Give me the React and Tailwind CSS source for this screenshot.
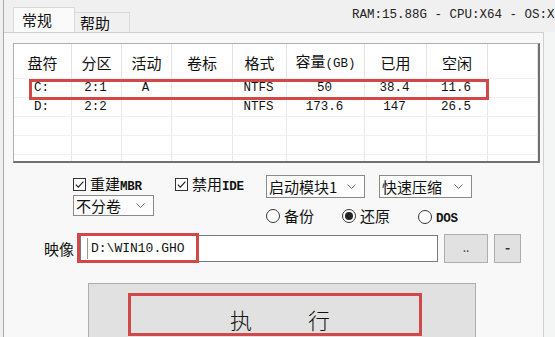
import React from 'react';

// 窗口里统一用的字体
const cjk = "font-['Noto_Sans_CJK_SC',sans-serif]";
const mono = "font-['Liberation_Mono','Noto_Sans_CJK_SC',monospace]";

const cols = [
  { label: '盘符', w: 'w-[58px]' },
  { label: '分区', w: 'w-[50px]' },
  { label: '活动', w: 'w-[50px]' },
  { label: '卷标', w: 'w-[61px]' },
  { label: '格式', w: 'w-[54px]' },
  { label: '容量(GB)', w: 'w-[78px]' },
  { label: '已用', w: 'w-[62px]' },
  { label: '空闲', w: 'w-[61px]' },
  { label: '', w: 'flex-1' },
];

const rows = [
  ['C:', '2:1', 'A', '', 'NTFS', '50', '38.4', '11.6', ''],
  ['D:', '2:2', '', '', 'NTFS', '173.6', '147', '26.5', ''],
  ['', '', '', '', '', '', '', '', ''],
  ['', '', '', '', '', '', '', '', ''],
  ['', '', '', '', '', '', '', '', ''],
];

function Chevron() {
  return (
    <svg width="9" height="5" viewBox="0 0 9 5" className="shrink-0">
      <polyline points="0.5,0.5 4.5,4.5 8.5,0.5" fill="none" stroke="#6b6b6b" strokeWidth="1" />
    </svg>
  );
}

function Checkbox({ children }) {
  return (
    <div className="flex items-center">
      <div className="w-[13px] h-[13px] border border-[#333] bg-white flex items-center justify-center">
        <svg width="11" height="11" viewBox="0 0 11 11">
          <polyline points="1.8,5.6 4.3,8.2 9.4,2.6" fill="none" stroke="#222" strokeWidth="1.2" />
        </svg>
      </div>
      <span className={`ml-[4px] text-[15px] leading-none text-[#111] ${cjk}`}>{children}</span>
    </div>
  );
}

function Radio({ checked, children }) {
  return (
    <div className="flex items-center">
      <div className="w-[14px] h-[14px] rounded-full border border-[#333] bg-white flex items-center justify-center">
        {checked && <div className="w-[8px] h-[8px] rounded-full bg-[#222]" />}
      </div>
      <span className="ml-[4px] text-[15px] leading-none text-[#111]">{children}</span>
    </div>
  );
}

function Combo({ w, h, children }) {
  return (
    <div className={`${w} ${h} border border-[#8a8a8a] bg-[#fdfdfd] flex items-center justify-between pl-[2px] pr-[8px]`}>
      <span className={`text-[15px] leading-none text-[#111] ${cjk}`}>{children}</span>
      <Chevron />
    </div>
  );
}

export default function App() {
  return (
    <div className={`w-[555px] h-[337px] overflow-hidden bg-[#f0f0f0] ${cjk}`}>
      <div className="ml-[3px] w-[552px] h-full border-l border-[#a9a9a9] flex flex-col">
        {/* 顶部：标签页 + 系统信息 */}
        <div className="h-[32px] shrink-0 flex items-end">
          <div className="ml-[9px] w-[62px] h-[25px] shrink-0 bg-[#fafafa] border border-b-0 border-[#d9d9d9] pl-[8px] pt-[4px]">
            <div className="text-[15px] leading-none text-[#111]">常规</div>
          </div>
          <div className="w-[55px] h-[20px] shrink-0 bg-[#f0f0f0] border border-b-0 border-l-0 border-[#d9d9d9] pl-[5px] pt-[2px]">
            <div className="text-[15px] leading-none text-[#111]">帮助</div>
          </div>
          <div className="flex-1 min-w-0 self-start pt-[9px] pl-[222px]">
            <div className={`whitespace-nowrap text-[12.5px] leading-none text-[#222] ${mono}`}>
              RAM:15.88G - CPU:X64 - OS:X
            </div>
          </div>
        </div>

        <div className="flex-1 flex">
          {/* 常规 页 */}
          <div className="w-[540px] shrink-0 border-t border-r border-[#d0d0d0] bg-[#f8f8f8] pl-[9px] pt-[10px] flex flex-col">
            {/* 分区列表 */}
            <div className="relative w-[527px] h-[120px] shrink-0 bg-white border-t border-l border-[#b0b0b0] border-r-2 border-b-2 border-r-[#707070] border-b-[#707070] overflow-hidden">
              <div className="flex h-[35px] border-b border-[#f0f0f0]">
                {cols.map((c, i) => (
                  <div key={i} className={`${c.w} h-full border-r border-[#e3e3e3] flex items-center justify-center pt-[2px]`}>
                    <span className="text-[15px] leading-none text-[#111] whitespace-nowrap">
                      {c.label === '容量(GB)' ? (
                        <>容量<span className={`text-[12.5px] ${mono}`}>(GB)</span></>
                      ) : c.label}
                    </span>
                  </div>
                ))}
              </div>
              {rows.map((r, ri) => (
                <div key={ri} className="flex h-[19px] border-b border-[#f0f0f0]">
                  {r.map((v, ci) => (
                    <div key={ci} className={`${cols[ci].w} h-full border-r border-[#e8e8e8] flex items-center justify-center pr-[2px]`}>
                      <span className={`text-[12.5px] leading-none text-[#111] ${mono}`}>{v}</span>
                    </div>
                  ))}
                </div>
              ))}
              {/* 标注红框 */}
              <div className="absolute left-[15px] top-[35px] w-[460px] h-[21px] border-[3px] border-[#d04848]" />
            </div>

            {/* 选项第一行 */}
            <div className="mt-[12px] h-[20px] flex items-start shrink-0">
              <div className="ml-[60px] w-[102px] pt-[1px]">
                <Checkbox>重建<span className={`text-[12.5px] font-bold tracking-tight ${mono}`}>MBR</span></Checkbox>
              </div>
              <div className="w-[91px] pt-[1px]">
                <Checkbox>禁用<span className={`text-[12.5px] font-bold tracking-tight ${mono}`}>IDE</span></Checkbox>
              </div>
              <Combo w="w-[99px]" h="h-[23px]">启动模块1</Combo>
              <div className="ml-[14px]">
                <Combo w="w-[93px]" h="h-[23px]">快速压缩</Combo>
              </div>
            </div>

            {/* 选项第二行 */}
            <div className="h-[27px] flex items-start shrink-0">
              <div className="ml-[60px]">
                <Combo w="w-[81px]" h="h-[21px]">不分卷</Combo>
              </div>
              <div className="ml-[112px] mt-[13px] w-[76px]">
                <Radio>备份</Radio>
              </div>
              <div className="mt-[13px] w-[76px]">
                <Radio checked>还原</Radio>
              </div>
              <div className="mt-[13px]">
                <Radio><span className={`text-[12.5px] font-bold tracking-tight ${mono}`}>DOS</span></Radio>
              </div>
            </div>

            {/* 映像路径 */}
            <div className="relative mt-[11px] h-[30px] flex items-center shrink-0">
              <span className="ml-[31px] w-[36px] text-[15px] leading-none text-[#111]">映像</span>
              <div className="w-[358px] h-[27px] bg-white border border-[#7a7a7a] flex items-center pl-[6px]">
                <div className="w-px h-[21px] bg-[#9a9a9a]" />
                <span className={`ml-[3px] text-[13px] leading-none text-[#111] ${mono}`}>D:\WIN10.GHO</span>
              </div>
              <button className="ml-[6px] w-[44px] h-[29px] bg-[#e1e1e1] border border-[#adadad] text-[12px] leading-none text-[#444] pb-[2px]">..</button>
              <button className="ml-[6px] w-[27px] h-[29px] bg-[#e1e1e1] border border-[#adadad] text-[14px] font-bold leading-none text-[#333] pb-[3px]">-</button>
              <div className="absolute left-[64px] top-0 w-[122px] h-[30px] border-[3px] border-[#d04848]" />
            </div>

            {/* 执行 */}
            <div className="relative mt-[20px] ml-[75px] w-[388px] h-[60px] shrink-0 bg-[#e1e1e1] border border-[#adadad]">
              <div className="flex justify-center gap-[56px] pt-[24px] pr-[4px]">
                <span className="text-[22px] font-light leading-none text-[#111]">执</span>
                <span className="text-[22px] font-light leading-none text-[#111]">行</span>
              </div>
              <div className="absolute left-[39px] top-[9px] w-[294px] h-[43px] border-[3px] border-[#d04848]" />
            </div>
          </div>

          {/* 右侧相邻窗口边缘 */}
          <div className="flex-1 bg-[#f4f6f6]" />
        </div>
      </div>
    </div>
  );
}
